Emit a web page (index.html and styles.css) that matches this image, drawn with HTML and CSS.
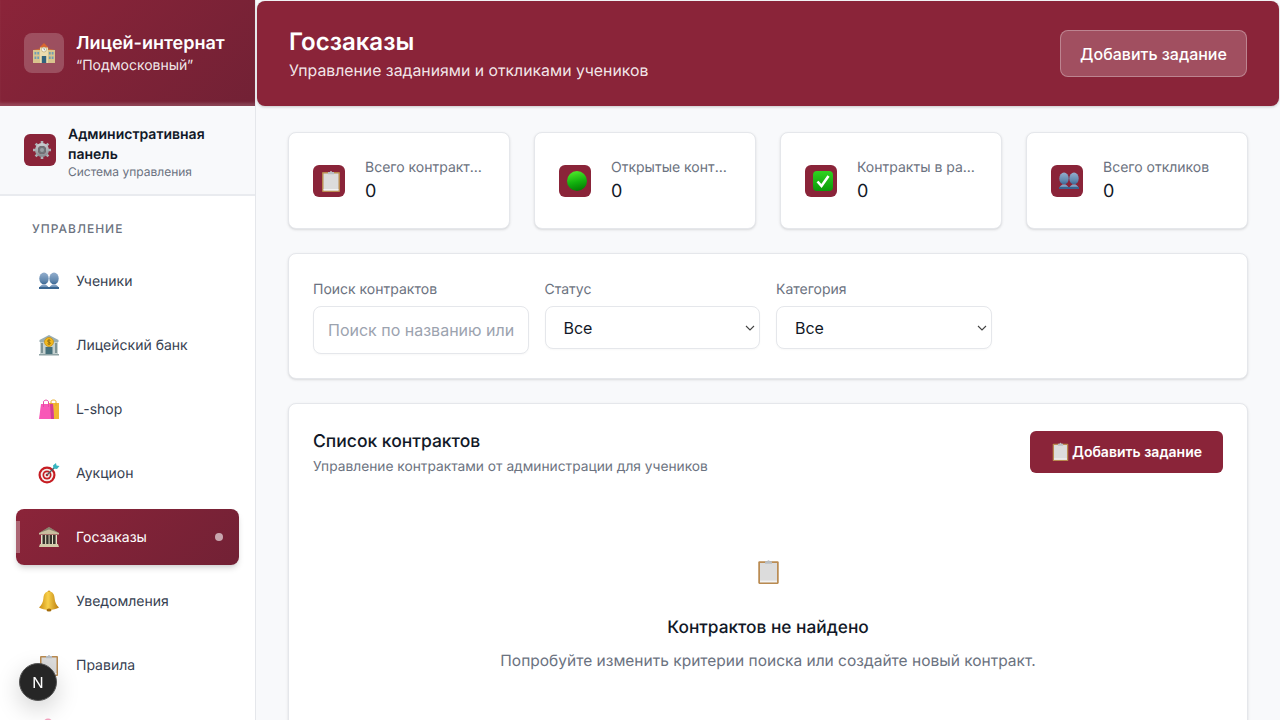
FILE: index.html
```html
<!DOCTYPE html>
<html lang="ru">
<head>
<meta charset="utf-8">
<title>Госзаказы</title>
<link rel="stylesheet" href="styles.css">
</head>
<body>
<svg class="defs" width="0" height="0" aria-hidden="true">
  <defs>
    <linearGradient id="gGreen" x1="0.35" y1="0" x2="0.6" y2="1"><stop offset="0" stop-color="#4fe82a"/><stop offset=".55" stop-color="#12b20e"/><stop offset="1" stop-color="#047a04"/></linearGradient>
    <linearGradient id="gCheck" x1="0" y1="0" x2="0" y2="1"><stop offset="0" stop-color="#2fd21f"/><stop offset="1" stop-color="#0a9a0a"/></linearGradient>
    <linearGradient id="gBell" x1="0" y1="0" x2="1" y2="0"><stop offset="0" stop-color="#c98a10"/><stop offset=".45" stop-color="#f8d04a"/><stop offset="1" stop-color="#b97a0c"/></linearGradient>
    <linearGradient id="gPeople" x1="0" y1="0" x2="0" y2="1"><stop offset="0" stop-color="#93aecd"/><stop offset=".7" stop-color="#5f86ad"/><stop offset="1" stop-color="#386592"/></linearGradient>
    <linearGradient id="gGear" x1="0" y1="0" x2="0" y2="1"><stop offset="0" stop-color="#c6cacd"/><stop offset="1" stop-color="#8b9095"/></linearGradient>
    <symbol id="i-clip" viewBox="0 0 22 22">
      <rect x="2" y="2" width="18" height="20" rx="1" fill="#b98a50"/>
      <rect x="3.500" y="3.500" width="15" height="17" fill="#dcdcdc"/>
      <rect x="3.500" y="19" width="15" height="1.500" fill="#f2f2f2"/>
      <path d="M8 2h2a1 1 0 0 1 2 0h2v2.200H8z" fill="#b8bec4"/>
    </symbol>
    <symbol id="i-green" viewBox="0 0 22 22"><circle cx="11" cy="11" r="10" fill="url(#gGreen)"/></symbol>
    <symbol id="i-check" viewBox="0 0 22 22">
      <rect x="1" y="1" width="20" height="20" rx="4" fill="url(#gCheck)"/>
      <path d="M5.500 11.500l4 4.500 7-10" fill="none" stroke="#fff" stroke-width="2.600"/>
    </symbol>
    <symbol id="i-people" viewBox="0 0 22 18">
      <g fill="url(#gPeople)">
        <ellipse cx="6" cy="6.500" rx="4.700" ry="6"/>
        <ellipse cx="16" cy="6.500" rx="4.700" ry="6"/>
        <path d="M1 17c0-2.500 2-3.500 3.500-4.500h3c1.500 1 3.500 2 3.500 4.500z"/>
        <path d="M11 17c0-2.500 2-3.500 3.500-4.500h3c1.500 1 3.500 2 3.500 4.500z"/>
      </g>
      <rect x="1" y="15" width="20" height="2" fill="#386592"/>
    </symbol>
    <symbol id="i-school" viewBox="0 0 24 22">
      <rect x="1" y="8" width="22" height="13" fill="#d9c48d"/>
      <rect x="8" y="5" width="8" height="16" fill="#ecdcae"/>
      <path d="M7.500 5.500L12 1l4.500 4.500z" fill="#d9652f"/>
      <path d="M1 8l7-1.500V8zM23 8l-7-1.500V8z" fill="#c96f38"/>
      <circle cx="12" cy="7.500" r="2.500" fill="#f7f7f2" stroke="#b19a5e" stroke-width=".6"/>
      <path d="M12 7.500v-1.600M12 7.500l1.200.5" stroke="#444" stroke-width=".5"/>
      <g fill="#6f9db5"><rect x="2.500" y="10" width="1.800" height="2.500"/><rect x="5.300" y="10" width="1.800" height="2.500"/><rect x="16.900" y="10" width="1.800" height="2.500"/><rect x="19.700" y="10" width="1.800" height="2.500"/><rect x="2.500" y="14.500" width="1.800" height="2.500"/><rect x="5.300" y="14.500" width="1.800" height="2.500"/><rect x="16.900" y="14.500" width="1.800" height="2.500"/><rect x="19.700" y="14.500" width="1.800" height="2.500"/></g>
      <rect x="9.800" y="14" width="4.400" height="7" fill="#33627c"/>
    </symbol>
    <symbol id="i-gear" viewBox="0 0 22 22">
      <g stroke="#aeb2b6" stroke-width="2.600"><path d="M11 2v4M11 16v4M2 11h4M16 11h4M4.600 4.600l2.800 2.800M14.600 14.600l2.800 2.800M4.600 17.400l2.800-2.800M14.600 7.400l2.800-2.800"/></g>
      <circle cx="11" cy="11" r="5.500" fill="none" stroke="url(#gGear)" stroke-width="3"/>
      <circle cx="11" cy="11" r="4" fill="#6f7478"/>
      <circle cx="11" cy="11" r="2" fill="#9a9fa3"/>
    </symbol>
    <symbol id="i-bank" viewBox="0 0 22 22">
      <path d="M11 1L1.500 6v2h19V6z" fill="#9aaeb2"/>
      <rect x="2" y="8" width="18" height="12" fill="#c4d0cf"/>
      <g fill="#7e9396"><rect x="3" y="9" width="2" height="10"/><rect x="17" y="9" width="2" height="10"/></g>
      <rect x="7.500" y="13" width="7" height="7" fill="#46707a"/>
      <rect x="1" y="20" width="20" height="1.500" fill="#8ea2a4"/>
      <circle cx="11" cy="8" r="4.500" fill="#f1b91f" stroke="#c58d0e" stroke-width=".7"/>
      <path d="M12.500 6.500c-.8-.8-3-.7-3 .6 0 1.500 3 .7 3 2.100 0 1.200-2.200 1.300-3 .5M11 5.300v5.500" fill="none" stroke="#7b5a08" stroke-width=".7"/>
    </symbol>
    <symbol id="i-bags" viewBox="0 0 22 22">
      <rect x="11" y="5" width="10" height="16" fill="#f2b632"/>
      <path d="M13 7V3.500C13 1.500 18 1.500 18 3.500V8" fill="none" stroke="#e7a923" stroke-width="1"/>
      <path d="M3 6h12l1 15H1z" fill="#f857b7"/>
      <path d="M12 6l3-.200 1 15.200h-3z" fill="#d23e94"/>
      <path d="M5.500 9V4C5.500 1.500 10.500 1.500 10.500 4V9" fill="none" stroke="#e64aa6" stroke-width="1"/>
    </symbol>
    <symbol id="i-target" viewBox="0 0 22 22">
      <circle cx="9" cy="13" r="8.500" fill="#c61c22"/>
      <circle cx="9" cy="13" r="6.300" fill="#f4f0ec"/>
      <circle cx="9" cy="13" r="4.500" fill="#c61c22"/>
      <circle cx="9" cy="13" r="2.800" fill="#f4f0ec"/>
      <circle cx="9" cy="13" r="1.300" fill="#c61c22"/>
      <path d="M9 13L17 5" stroke="#4b5a60" stroke-width="1.200"/>
      <path d="M15 3.500L18 1l.5 2.500L21.500 4 19 7l-3.500-.500z" fill="#36b5c0"/>
    </symbol>
    <symbol id="i-classic" viewBox="0 0 22 22">
      <path d="M11 1L1 7v1.500h20V7z" fill="#c9bf9f"/>
      <path d="M1 7L11 1l10 6-10-3.500z" fill="#3c3a33" opacity=".45"/>
      <rect x="3" y="9" width="16" height="9" fill="#e6dfc6"/>
      <g fill="#36332c"><rect x="4.500" y="9" width="2.600" height="9"/><rect x="8.200" y="9" width="2.400" height="9"/><rect x="11.600" y="9" width="2.400" height="9"/><rect x="15" y="9" width="2.600" height="9"/></g>
      <path d="M2 18h18l1 3H1z" fill="#d3caa9"/>
    </symbol>
    <symbol id="i-bell" viewBox="0 0 22 22">
      <circle cx="11" cy="2" r="1.500" fill="#c98a10"/>
      <path d="M11 1.500c3.700 0 5.300 2.800 5.600 6.700.3 3.900 1.500 6.400 4.400 9.300-2.500 1.700-6 2.300-10 2.300s-7.500-.6-10-2.300c2.900-2.900 4.100-5.400 4.400-9.300.3-3.900 1.900-6.700 5.600-6.700z" fill="url(#gBell)"/>
      <ellipse cx="11" cy="20" rx="2.500" ry="1.500" fill="#a46c0a"/>
    </symbol>
    <symbol id="i-pink" viewBox="0 0 22 22"><circle cx="10" cy="5" r="4.500" fill="#f5a3c0"/></symbol>
  </defs>
</svg>

<div class="app">
  <aside class="sidebar">
    <div class="brand">
      <span class="brand-icon"><svg class="ico-brand"><use href="#i-school"/></svg></span>
      <div class="brand-text">
        <div class="brand-title">Лицей-интернат</div>
        <div class="brand-sub">“Подмосковный”</div>
      </div>
    </div>
    <div class="panel">
      <span class="tile"><svg class="ico-22"><use href="#i-gear"/></svg></span>
      <div class="panel-text">
        <div class="panel-title">Административная панель</div>
        <div class="panel-sub">Система управления</div>
      </div>
    </div>
    <nav class="nav">
      <div class="nav-label">УПРАВЛЕНИЕ</div>
      <a class="nav-item"><svg class="nav-ico"><use href="#i-people"/></svg><span>Ученики</span></a>
      <a class="nav-item"><svg class="nav-ico"><use href="#i-bank"/></svg><span>Лицейский банк</span></a>
      <a class="nav-item"><svg class="nav-ico"><use href="#i-bags"/></svg><span>L-shop</span></a>
      <a class="nav-item"><svg class="nav-ico"><use href="#i-target"/></svg><span>Аукцион</span></a>
      <a class="nav-item active"><svg class="nav-ico"><use href="#i-classic"/></svg><span>Госзаказы</span><i class="nav-dot"></i></a>
      <a class="nav-item"><svg class="nav-ico"><use href="#i-bell"/></svg><span>Уведомления</span></a>
      <a class="nav-item"><svg class="nav-ico"><use href="#i-clip"/></svg><span>Правила</span></a>
      <a class="nav-item"><svg class="nav-ico"><use href="#i-pink"/></svg></a>
    </nav>
  </aside>

  <main class="main">
    <header class="topbar">
      <div>
        <h1 class="top-title">Госзаказы</h1>
        <p class="top-sub">Управление заданиями и откликами учеников</p>
      </div>
      <button class="top-btn">Добавить задание</button>
    </header>

    <div class="content">
      <section class="stats">
        <div class="card stat"><span class="tile"><svg class="ico-22"><use href="#i-clip"/></svg></span><div class="stat-text"><div class="stat-label">Всего контрактов</div><div class="stat-value">0</div></div></div>
        <div class="card stat"><span class="tile"><svg class="ico-22"><use href="#i-green"/></svg></span><div class="stat-text"><div class="stat-label">Открытые контракты</div><div class="stat-value">0</div></div></div>
        <div class="card stat"><span class="tile"><svg class="ico-22"><use href="#i-check"/></svg></span><div class="stat-text"><div class="stat-label">Контракты в работе</div><div class="stat-value">0</div></div></div>
        <div class="card stat"><span class="tile"><svg class="ico-22"><use href="#i-people"/></svg></span><div class="stat-text"><div class="stat-label">Всего откликов</div><div class="stat-value">0</div></div></div>
      </section>

      <section class="card filters">
        <div class="field">
          <label class="field-label" for="q">Поиск контрактов</label>
          <input class="input" id="q" type="text" placeholder="Поиск по названию или описанию">
        </div>
        <div class="field">
          <label class="field-label" for="s">Статус</label>
          <select class="select" id="s"><option>Все</option></select>
        </div>
        <div class="field">
          <label class="field-label" for="c">Категория</label>
          <select class="select" id="c"><option>Все</option></select>
        </div>
      </section>

      <section class="card list">
        <div class="list-head">
          <div class="list-heading">
            <h2 class="list-title">Список контрактов</h2>
            <p class="list-sub">Управление контрактами от администрации для учеников</p>
          </div>
          <button class="add-btn"><svg class="add-ico"><use href="#i-clip"/></svg><span class="add-text">Добавить задание</span></button>
        </div>
        <div class="empty">
          <svg class="empty-ico"><use href="#i-clip"/></svg>
          <h3 class="empty-title">Контрактов не найдено</h3>
          <p class="empty-text">Попробуйте изменить критерии поиска или создайте новый контракт.</p>
        </div>
      </section>
    </div>
  </main>
</div>
<div class="next-badge">N</div>
</body>
</html>
```
FILE: styles.css
```css
* { box-sizing: border-box; }
html, body { margin: 0; height: 100%; overflow: hidden; }
body { font-family: Inter, "Liberation Sans", sans-serif; background: #f8f9fb; color: #111827; text-rendering: geometricPrecision; }
.defs { display: block; height: 0; }
.app { display: flex; height: 720px; overflow: hidden; }

.sidebar { width: 256px; flex: none; background: #fff; border-right: 1px solid #e5e7eb; overflow: hidden; }
.brand { height: 106px; padding: 0 24px; display: flex; align-items: center; gap: 12px; color: #fff;
  background: linear-gradient(135deg, #8b2439 0%, #722135 100%);
  box-shadow: inset 0 -4px 3px -1px rgba(255,255,255,.16); }
.brand-icon { width: 40px; height: 40px; flex: none; border-radius: 8px; background: rgba(255,255,255,.2); display: flex; align-items: center; justify-content: center; }
.brand-text { padding-top: 2px; }
.brand-title { font-size: 18px; line-height: 24px; font-weight: 600; }
.brand-sub { font-size: 14px; line-height: 20px; color: rgba(255,255,255,.9); }
.ico-brand { width: 24px; height: 22px; display: block; }
.ico-22 { width: 22px; height: 22px; display: block; }

.tile { width: 32px; height: 32px; flex: none; padding-left: 4px; border-radius: 6px; background: #8a2439; display: flex; align-items: center; justify-content: center; }
.panel { height: 90px; padding: 0 24px; display: flex; align-items: center; gap: 12px; background: #f8f9fb; border-bottom: 2px solid #e9ebef; }
.panel-text { padding-top: 4px; }
.panel-title { font-size: 14px; line-height: 20px; font-weight: 600; color: #111827; }
.panel-sub { font-size: 12px; line-height: 16px; color: #6b7280; margin-top: -1px; }

.nav { padding: 25px 16px 0; display: flex; flex-direction: column; gap: 8px; }
.nav-label { padding: 0 16px; font-size: 12px; line-height: 16px; font-weight: 500; letter-spacing: 1px; color: #6b7280; margin-bottom: 8px; }
.nav-item { height: 56px; flex: none; padding: 0 16px 0 22px; display: flex; align-items: center; gap: 16px; border-radius: 8px; font-size: 14px; font-weight: 400; color: #374151; }
.nav-ico { width: 22px; height: 22px; flex: none; }
.nav-item.active { position: relative; color: #fff; background: linear-gradient(135deg, #8b2439 0%, #722135 100%); box-shadow: 0 4px 6px -1px rgba(0,0,0,.15), 0 2px 4px -2px rgba(0,0,0,.1); }
.nav-item.active::before { content: ""; position: absolute; left: 0; top: 12px; bottom: 12px; width: 4px; background: rgba(255,255,255,.3); }
.nav-dot { margin-left: auto; width: 8px; height: 8px; border-radius: 50%; background: rgba(255,255,255,.6); }

.main { flex: 1; min-width: 0; overflow: hidden; }
.topbar { margin: 1px 1px 0; height: 105px; padding: 0 32px; display: flex; align-items: center; justify-content: space-between; background: #8a2439; color: #fff; border-radius: 8px; box-shadow: 0 1px 3px rgba(0,0,0,.2); }
.top-title { margin: 0; font-size: 24px; line-height: 32px; font-weight: 600; }
.top-sub { margin: 1px 0 -1px; font-size: 15.800px; line-height: 24px; color: rgba(255,255,255,.9); }
.top-btn { height: 47px; width: 187px; font: 500 16px Inter, sans-serif; color: #fff; background: rgba(255,255,255,.2); border: 1px solid rgba(255,255,255,.3); border-radius: 8px; }

.content { padding: 26px 32px 0; display: flex; flex-direction: column; gap: 24px; }
.card { background: #fff; border: 1px solid #e5e7eb; border-radius: 8px; box-shadow: 0 1px 3px rgba(0,0,0,.1), 0 1px 2px -1px rgba(0,0,0,.1); }
.stats { display: grid; grid-template-columns: repeat(4, minmax(0, 1fr)); gap: 24px; }
.stat { height: 97px; padding: 0 24px; display: flex; align-items: center; gap: 20px; }
.stat-text { min-width: 0; flex: 1; padding-top: 3px; }
.stat-label { font-size: 14px; line-height: 20px; font-weight: 400; color: #6b7280; white-space: nowrap; overflow: hidden; text-overflow: ellipsis; }
.stat-value { font-size: 18px; line-height: 28px; font-weight: 400; color: #111827; }

.filters { padding: 26px 24px 24px; display: grid; grid-template-columns: repeat(4, minmax(0, 1fr)); gap: 16px; align-items: start; }
.field { display: flex; flex-direction: column; gap: 6px; }
.field-label { font-size: 14px; line-height: 20px; color: #6b7280; font-weight: 400; }
.input { height: 48px; width: 100%; padding: 12px 14px; font: 16px Inter, sans-serif; color: #111827; background: #fff; border: 1px solid #e5e7eb; border-radius: 8px; box-shadow: 0 1px 2px rgba(0,0,0,.03); }
.input::placeholder { color: #9ca3af; opacity: 1; }
.select { appearance: none; height: 43px; width: 100%; padding: 0 18px; font: 16px Inter, sans-serif; color: #111827; background: #fff url("data:image/svg+xml,%3Csvg xmlns='http://www.w3.org/2000/svg' width='10' height='6'%3E%3Cpath d='M1 1l4 4 4-4' fill='none' stroke='%23444' stroke-width='1.100'/%3E%3C/svg%3E") no-repeat right 4px center; border: 1px solid #e5e7eb; border-radius: 8px; box-shadow: 0 1px 2px rgba(0,0,0,.03); }

.list { height: 400px; padding: 24px; }
.list-head { display: flex; justify-content: space-between; align-items: flex-start; }
.list-heading { padding-top: 1px; }
.list-title { margin: 0 0 2px; font-size: 17.500px; line-height: 26px; font-weight: 500; color: #111827; }
.list-sub { margin: 0; font-size: 13.750px; line-height: 20px; color: #6b7280; }
.add-btn { margin-top: 3px; height: 42px; width: 193px; display: flex; align-items: center; justify-content: center; gap: 2px; font: 600 14px Inter, sans-serif; color: #fff; background: #8a2439; border: 0; border-radius: 6px; }
.add-text { margin-top: -1px; }
.add-ico { width: 19px; height: 19px; flex: none; margin-top: -2px; }
.empty { padding-top: 82px; display: flex; flex-direction: column; align-items: center; }
.empty-ico { width: 25px; height: 25px; display: block; }
.empty-title { margin: 32px 0 0; font-size: 17.300px; line-height: 24px; font-weight: 450; color: #111827; }
.empty-text { margin: 9px 0 0; font-size: 15.530px; line-height: 24px; color: #6b7280; }

.next-badge { position: fixed; left: 19px; top: 663px; width: 38px; height: 38px; border-radius: 50%; background: #262626; border: 1.500px solid #555; color: #fff; font-size: 15px; font-weight: 400; display: flex; align-items: center; justify-content: center; box-shadow: 0 8px 24px rgba(0,0,0,.18); }
```
